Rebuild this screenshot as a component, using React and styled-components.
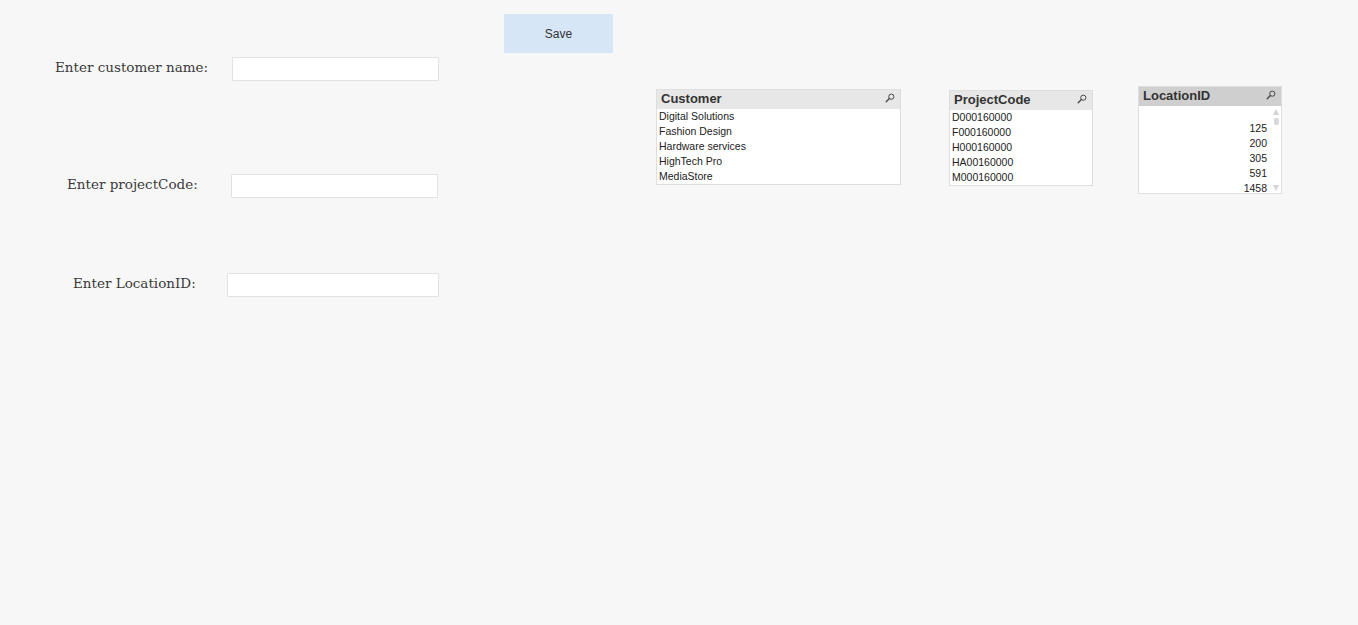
import React from 'react';
import styled, { createGlobalStyle } from 'styled-components';

const GlobalStyle = createGlobalStyle`
  html, body {
    margin: 0;
    padding: 0;
    background: #f7f7f7;
  }
  body {
    font-family: "Liberation Sans", Arial, sans-serif;
    color: #333;
  }
`;

const Sheet = styled.div`
  display: flex;
  align-items: flex-start;
  width: 1358px;
  height: 625px;
  background: #f7f7f7;
  overflow: hidden;
`;

const Form = styled.div`
  display: flex;
  flex-direction: column;
  width: 439px;
`;

const FieldRow = styled.div`
  display: flex;
  align-items: center;
  margin-top: ${(p) => p.$top}px;
  padding-left: ${(p) => p.$indent}px;
`;

const Label = styled.label`
  margin-bottom: 4px;
  font-family: "DejaVu Serif", "Liberation Serif", serif;
  font-size: 13.5px;
  color: #3a3a3a;
  white-space: nowrap;
`;

const TextInput = styled.input`
  box-sizing: border-box;
  margin-left: auto;
  margin-right: ${(p) => p.$right || 0}px;
  width: ${(p) => p.$width}px;
  height: 24px;
  border: 1px solid #e2e2e2;
  border-radius: 1px;
  background: #fff;
  outline: none;
`;

const SaveButton = styled.button`
  box-sizing: border-box;
  margin: 14px 0 0 65px;
  width: 109px;
  height: 39px;
  border: none;
  background: #d6e6f6;
  font-family: "Liberation Sans", Arial, sans-serif;
  font-size: 12px;
  color: #333;
  cursor: pointer;
`;

const ListBox = styled.div`
  box-sizing: border-box;
  display: flex;
  flex-direction: column;
  margin: ${(p) => p.$top}px 0 0 ${(p) => p.$left}px;
  width: ${(p) => p.$width}px;
  height: ${(p) => p.$height}px;
  border: 1px solid #dedede;
  background: #fff;
  overflow: hidden;
`;

const Caption = styled.div`
  box-sizing: border-box;
  display: flex;
  align-items: center;
  justify-content: space-between;
  flex: 0 0 19px;
  padding: 0 5px 2px 4px;
  background: ${(p) => (p.$active ? '#cfcfcf' : '#e7e7e7')};
  font-family: "Liberation Sans", Arial, sans-serif;
  font-weight: bold;
  font-size: 13px;
  color: #333;

  svg {
    align-self: flex-start;
    margin-top: 3px;
  }
`;

const Body = styled.div`
  display: flex;
  flex: 1;
  min-height: 0;
`;

const Rows = styled.div`
  flex: 1;
  overflow: hidden;
`;

const Row = styled.div`
  height: 15px;
  line-height: 15px;
  padding: 0 ${(p) => (p.$numeric ? 4 : 2)}px 0 2px;
  text-align: ${(p) => (p.$numeric ? 'right' : 'left')};
  font-family: "Liberation Sans", Arial, sans-serif;
  font-size: 10.5px;
  color: #222;
  white-space: nowrap;
`;

const ScrollTrack = styled.div`
  display: flex;
  flex-direction: column;
  align-items: center;
  width: 10px;
  padding-top: 3px;
`;

const Arrow = styled.div`
  width: 0;
  height: 0;
  border-left: 3.5px solid transparent;
  border-right: 3.5px solid transparent;
  ${(p) => (p.$down ? 'border-top' : 'border-bottom')}: 6px solid #d4d4d4;
  margin-top: ${(p) => (p.$down ? 'auto' : '0')};
  margin-bottom: ${(p) => (p.$down ? '2px' : '0')};
`;

const Thumb = styled.div`
  width: 5px;
  height: 7px;
  margin-top: 3px;
  border-radius: 2px;
  background: #d8d8d8;
`;

function SearchIcon() {
  return (
    <svg width="10" height="10" viewBox="0 0 10 10">
      <circle cx="6.3" cy="3.7" r="2.6" fill="none" stroke="#4a4a4a" strokeWidth="1" />
      <line x1="4.4" y1="5.6" x2="1.2" y2="8.8" stroke="#4a4a4a" strokeWidth="1.4" strokeLinecap="round" />
    </svg>
  );
}

function FieldList({ title, items, active, numeric, scroll, ...box }) {
  return (
    <ListBox {...box}>
      <Caption $active={active}>
        <span>{title}</span>
        <SearchIcon />
      </Caption>
      <Body>
        <Rows>
          {items.map((item, i) => (
            <Row key={`${title}-${i}`} $numeric={numeric}>{item || '\u00a0'}</Row>
          ))}
        </Rows>
        {scroll && (
          <ScrollTrack>
            <Arrow />
            <Thumb />
            <Arrow $down />
          </ScrollTrack>
        )}
      </Body>
    </ListBox>
  );
}

const customers = ['Digital Solutions', 'Fashion Design', 'Hardware services', 'HighTech Pro', 'MediaStore'];
const projectCodes = ['D000160000', 'F000160000', 'H000160000', 'HA00160000', 'M000160000'];
const locations = ['', '125', '200', '305', '591', '1458'];

export default function App() {
  return (
    <>
      <GlobalStyle />
      <Sheet>
        <Form>
          <FieldRow $top={57} $indent={55}>
            <Label>Enter customer name:</Label>
            <TextInput $width={207} $right={0} />
          </FieldRow>
          <FieldRow $top={93} $indent={67}>
            <Label>Enter projectCode:</Label>
            <TextInput $width={207} $right={1} />
          </FieldRow>
          <FieldRow $top={75} $indent={73}>
            <Label>Enter LocationID:</Label>
            <TextInput $width={212} $right={0} />
          </FieldRow>
        </Form>
        <SaveButton>Save</SaveButton>
        <FieldList title="Customer" items={customers} $top={89} $left={43} $width={245} $height={96} />
        <FieldList title="ProjectCode" items={projectCodes} $top={90} $left={48} $width={144} $height={96} />
        <FieldList
          title="LocationID"
          items={locations}
          active
          numeric
          scroll
          $top={86}
          $left={45}
          $width={144}
          $height={108}
        />
      </Sheet>
    </>
  );
}
